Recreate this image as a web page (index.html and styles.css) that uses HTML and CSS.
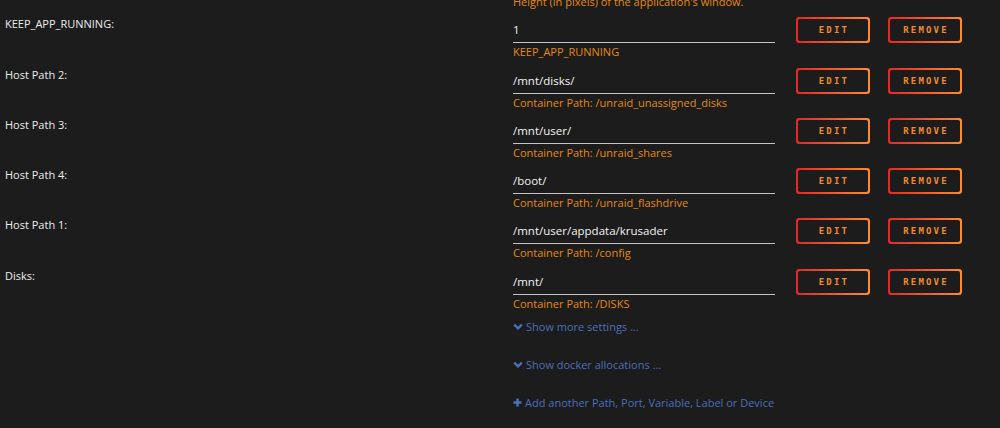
FILE: index.html
```html
<!DOCTYPE html>
<html lang="en">
<head>
    <meta charset="UTF-8">
    <title>Update Container</title>
    <link rel="stylesheet" href="styles.css">
</head>
<body>
    <div class="config">
        <!-- previous variable, scrolled mostly out of view -->
        <div class="row">
            <div class="label"></div>
            <div class="field">
                <div class="value"></div>
                <div class="desc">Height (in pixels) of the application's window.</div>
            </div>
        </div>

        <div class="row">
            <div class="label">KEEP_APP_RUNNING:</div>
            <div class="field">
                <div class="value">1</div>
                <div class="desc">KEEP_APP_RUNNING</div>
            </div>
            <div class="actions">
                <button class="btn"><span>EDIT</span></button>
                <button class="btn"><span>REMOVE</span></button>
            </div>
        </div>

        <div class="row">
            <div class="label">Host Path 2:</div>
            <div class="field">
                <div class="value">/mnt/disks/</div>
                <div class="desc">Container Path: /unraid_unassigned_disks</div>
            </div>
            <div class="actions">
                <button class="btn"><span>EDIT</span></button>
                <button class="btn"><span>REMOVE</span></button>
            </div>
        </div>

        <div class="row">
            <div class="label">Host Path 3:</div>
            <div class="field">
                <div class="value">/mnt/user/</div>
                <div class="desc">Container Path: /unraid_shares</div>
            </div>
            <div class="actions">
                <button class="btn"><span>EDIT</span></button>
                <button class="btn"><span>REMOVE</span></button>
            </div>
        </div>

        <div class="row">
            <div class="label">Host Path 4:</div>
            <div class="field">
                <div class="value">/boot/</div>
                <div class="desc">Container Path: /unraid_flashdrive</div>
            </div>
            <div class="actions">
                <button class="btn"><span>EDIT</span></button>
                <button class="btn"><span>REMOVE</span></button>
            </div>
        </div>

        <div class="row">
            <div class="label">Host Path 1:</div>
            <div class="field">
                <div class="value">/mnt/user/appdata/krusader</div>
                <div class="desc">Container Path: /config</div>
            </div>
            <div class="actions">
                <button class="btn"><span>EDIT</span></button>
                <button class="btn"><span>REMOVE</span></button>
            </div>
        </div>

        <div class="row">
            <div class="label">Disks:</div>
            <div class="field">
                <div class="value">/mnt/</div>
                <div class="desc">Container Path: /DISKS</div>
            </div>
            <div class="actions">
                <button class="btn"><span>EDIT</span></button>
                <button class="btn"><span>REMOVE</span></button>
            </div>
        </div>

        <div class="links">
            <a href="#" class="link">
                <svg width="10" height="8" viewBox="0 0 10 8"><path d="M1.2 1.6 L5 5.4 L8.8 1.6" fill="none" stroke="currentColor" stroke-width="2.4"/></svg>
                Show more settings ...
            </a>
            <a href="#" class="link">
                <svg width="10" height="8" viewBox="0 0 10 8"><path d="M1.2 1.6 L5 5.4 L8.8 1.6" fill="none" stroke="currentColor" stroke-width="2.4"/></svg>
                Show docker allocations ...
            </a>
            <a href="#" class="link">
                <svg width="9" height="9" viewBox="0 0 9 9"><path d="M4.5 0.5 V8.5 M0.5 4.5 H8.5" fill="none" stroke="currentColor" stroke-width="2.4"/></svg>
                Add another Path, Port, Variable, Label or Device
            </a>
        </div>
    </div>
</body>
</html>
```

FILE: styles.css
```css
* { margin: 0; padding: 0; box-sizing: border-box; }

body {
    background: #1c1c1c;
    color: #e4e4e4;
    font-family: "Open Sans", "Noto Sans", sans-serif;
    font-size: 11px;
    overflow: hidden;
}

.config {
    margin-top: -38px;
}

/* one variable / path per row */
.row {
    display: grid;
    grid-template-columns: 508px 262px 1fr;
    height: 50.25px;
    padding-left: 5px;
}

.label {
    padding-top: 4px;
    line-height: 16px;
    color: #ececec;
}

.field {
    padding-top: 10px;
}

.value {
    height: 21px;
    line-height: 16px;
    font-size: 11.5px;
    color: #f2f2f2;
    border-bottom: 1px solid #c4c4c4;
}

.desc {
    margin-top: 1px;
    line-height: 16px;
    color: #e48a10;
    white-space: nowrap;
}

.actions {
    display: flex;
    gap: 18px;
    padding: 5px 0 0 21px;
}

/* gradient border buttons */
.btn {
    width: 74px;
    height: 26px;
    padding: 2px;
    border: none;
    border-radius: 3px;
    background: linear-gradient(90deg, #e22828, #ff8b2f);
    font-family: "DejaVu Sans Mono", monospace;
    font-size: 9px;
    font-weight: bold;
    letter-spacing: 2.2px;
    color: #f28a2a;
    cursor: pointer;
}

.btn span {
    display: flex;
    align-items: center;
    justify-content: center;
    height: 100%;
    padding-left: 2px;
    border-radius: 2px;
    background: #1c1c1c;
}

.links {
    display: flex;
    flex-direction: column;
    gap: 22px;
    padding: 5px 0 0 513px;
}

.link {
    display: flex;
    align-items: center;
    gap: 3px;
    height: 16px;
    color: #4a6fbb;
    text-decoration: none;
    font-size: 11px;
}
```
